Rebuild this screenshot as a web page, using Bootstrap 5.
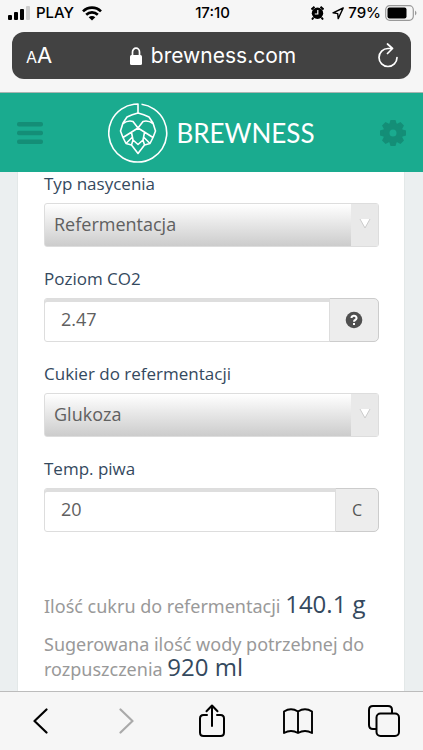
<!DOCTYPE html>
<html lang="pl">
<head>
<meta charset="utf-8">
<meta name="viewport" content="width=device-width, initial-scale=1">
<title>Brewness</title>
<link href="https://cdn.jsdelivr.net/npm/bootstrap@5.3.0/dist/css/bootstrap.min.css" rel="stylesheet">
<style>
body{background:#ebeff0;font-family:"Open Sans","Noto Sans",sans-serif;color:#34495e}
svg{display:block;flex-shrink:0}
.chrome-top,.chrome-bottom{background:#f6f6f6;font-family:Inter,"Liberation Sans",sans-serif;color:#000}
.chrome-top{border-bottom:1px solid #a9b5b2;padding-bottom:13px}
.status{height:32px;padding:0 6px 6px 8px;font-size:15px;line-height:26px;font-weight:500}
.side{flex:1 1 0}
.carrier{margin-left:6px}
.address{height:47px;margin:0 12px;padding:0 12px 0 14px;background:#424242;border-radius:12px;color:#fff}
.address .host{font-size:21px;line-height:47px}
.aa-small{font-size:16px}.aa-big{font-size:22px}
.chrome-btn{background:none;border:0;padding:0;color:inherit}
.site-header{background:#1aab8f;height:79px;padding:0 17px}
.site-header .chrome-btn{color:#148e77}
.brand{color:#fff;font-family:Lato,sans-serif;font-size:26px;line-height:1;gap:8px}
.brand:hover{color:#fff}
.sheet{background:#fff;border:solid #e3e8e8;border-width:0 1px;margin:0 18px 0 17px;padding:0 25px 0 26px}
.field{margin-bottom:20px}
.field label{display:block;font-size:17px;line-height:24px;margin-bottom:7px}
.pick{position:relative}
.pick select{height:44px;font-size:18px;line-height:24px;color:#606060;padding:0 38px 2px 9px;border:1px solid #ddd;border-radius:3px;background:linear-gradient(#fff,#ccc)}
.pick-arrow{position:absolute;top:1px;right:1px;bottom:1px;width:27px;background:#e9e9e9;pointer-events:none;padding-top:14px}
.entry .form-control{height:44px;font-size:18px;color:#606060;padding:0 16px 2px;border:1px solid #ddd;border-radius:3px;box-shadow:inset 0 3px 0 #dedede}
.entry .input-group-text{height:44px;background:#ededed;border:1px solid #ccc;border-radius:5px;color:#555;font-size:16px;padding:0 16px}
.entry button.input-group-text{padding:0 15px}
.results{padding-top:42px;color:#999;font-family:"Noto Sans",sans-serif;font-size:18px;line-height:25px}
.results p{margin-bottom:13px}
.results strong{font-family:"Open Sans",sans-serif;font-weight:400;font-size:24px;line-height:1px;color:#34495e}
.chrome-bottom{height:59px;border-top:1px solid #bcbcbc;padding:0 23px 0 24px}
.chrome-bottom .chrome-btn{width:32px}
.chrome-bottom svg{margin:0 auto}
</style>
<script src="https://cdn.jsdelivr.net/npm/bootstrap@5.3.0/dist/js/bootstrap.bundle.min.js"></script>
</head>
<body class="d-flex flex-column vh-100 overflow-hidden">
<div class="chrome-top flex-shrink-0">
  <div class="status d-flex align-items-center">
    <div class="side d-flex align-items-center">
      <svg width="22" height="14" viewBox="0 0 22 14"><rect x="0" y="9" width="4" height="5" rx="1"/><rect x="6" y="6" width="4" height="8" rx="1"/><rect x="12" y="3" width="4" height="11" rx="1"/><rect x="18" y="0" width="4" height="14" rx="1" fill="#ccc"/></svg>
      <span class="carrier">PLAY</span>
      <svg class="ms-2" width="20" height="15" viewBox="0 0 20 15" fill="none" stroke="#000" stroke-width="2.6"><path d="M1 5.4C6 .4 14 .4 19 5.4M4.2 8.8c3.3-3.2 8.3-3.2 11.6 0"/><path d="M10 14.5 6.7 11.2c1.9-1.7 4.7-1.7 6.6 0Z" fill="#000" stroke="none"/></svg>
    </div>
    <span>17:10</span>
    <div class="side d-flex align-items-center justify-content-end">
      <svg width="13" height="14" viewBox="0 0 13 14"><circle cx="6.5" cy="7.3" r="5.7"/><path d="M.5 3.5 3.5.8M12.500 3.500 9.500.8M2.500 11.500 1 13.500M10.500 11.500 12 13.500" stroke="#000" stroke-width="2"/><path d="M6.800 4v4H3.800" fill="none" stroke="#fff" stroke-width="1.200"/></svg>
      <svg class="ms-2" width="12" height="13" viewBox="0 0 12 13" fill="none" stroke="#000" stroke-width="1.400" stroke-linejoin="round"><path d="M11.200 1 1 5.800l4.700.8.500 5Z"/></svg>
      <span class="ms-1">79%</span>
      <svg class="ms-1" width="32" height="16" viewBox="0 0 32 16"><rect x=".7" y=".7" width="27.600" height="14.600" rx="4" fill="none" stroke="#999" stroke-width="1.200"/><rect x="2.500" y="2.500" width="19" height="11" rx="2"/><path d="M30 5.500q3 2.500 0 5Z" fill="#999"/></svg>
    </div>
  </div>
  <div class="address d-flex align-items-center">
    <div class="side"><button class="chrome-btn" type="button"><span class="aa-small">A</span><span class="aa-big">A</span></button></div>
    <div class="host d-flex align-items-center">
      <svg class="me-2" width="14" height="18" viewBox="0 0 14 18"><rect x="1" y="8" width="12" height="10" rx="1.500" fill="#fff"/><path d="M3.500 9V5a3.500 3.800 0 0 1 7 0v4" fill="none" stroke="#fff" stroke-width="1.700"/></svg>
      <span>brewness.com</span>
    </div>
    <div class="side d-flex justify-content-end">
      <button class="chrome-btn" type="button" aria-label="Odśwież"><svg width="22" height="26" viewBox="0 0 22 26" fill="none" stroke="#fff" stroke-width="1.700" stroke-linecap="round" stroke-linejoin="round"><path d="M20 14.500a9 9 0 1 1-9-9h4.500M10.500 1l5 4.500-5 5"/></svg></button>
    </div>
  </div>
</div>

<header class="site-header d-flex align-items-center justify-content-between flex-shrink-0">
  <button class="chrome-btn" type="button" aria-label="Menu"><svg width="26" height="22" viewBox="0 0 26 22" fill="currentColor"><rect width="26" height="4.500" rx="2"/><rect y="8.700" width="26" height="4.500" rx="2"/><rect y="17.400" width="26" height="4.500" rx="2"/></svg></button>
  <a class="brand d-flex align-items-center text-decoration-none" href="#">
    <svg width="60" height="60" viewBox="0 0 60 60" fill="none" stroke="#fff" stroke-width="1.600" stroke-linejoin="round"><path d="M33.500 1.300A29 29 0 1 1 26 1.300L30 1V10"/><path d="M30 10Q24 11.500 19 14L15 20 12.500 28 15 34.500 18 40.500 23.500 42 30 50.500 36.500 42 42 40.500 45 34.500 47.500 28 45 20 41 14Q36 11.500 30 10M15 20.500Q20 17 25 18.500L30 25 35 18.500Q40 17 45 20.500M30 25 15 34.500M30 25 45 34.500M23.500 29.500 25 37 30 41.500 35 37 36.500 29.500M25 37 23.500 42M35 37 36.500 42M24.500 34 18 40.500M35.500 34 42 40.500"/></svg>
    <span>BREWNESS</span>
  </a>
  <button class="chrome-btn" type="button" aria-label="Ustawienia"><svg width="26" height="26" viewBox="-13 -13 26 26" fill="currentColor"><path id="bar" d="M-2.500-13h5l1.500 5h-8ZM-2.500 13h5l1.500-5h-8Z"/><use href="#bar" transform="rotate(45)"/><use href="#bar" transform="rotate(90)"/><use href="#bar" transform="rotate(135)"/><circle r="6.700" fill="none" stroke="currentColor" stroke-width="6.400"/></svg></button>
</header>

<main class="flex-grow-1 overflow-hidden d-flex flex-column">
  <form class="sheet flex-grow-1">
    <div class="field">
      <label for="kind">Typ nasycenia</label>
      <div class="pick"><select class="form-select" id="kind"><option>Refermentacja</option></select>
        <span class="pick-arrow d-flex justify-content-center"><svg width="12" height="11" viewBox="0 0 12 11"><path d="M1 1h10L6 10Z" fill="#fff"/><path d="m1 1 5 9 5-9" fill="none" stroke="#ccc"/></svg></span></div>
    </div>
    <div class="field">
      <label for="level">Poziom CO2</label>
      <div class="input-group entry"><input class="form-control" id="level" type="text" value="2.47">
        <button class="input-group-text" type="button" aria-label="Pomoc"><svg width="18" height="18" viewBox="0 0 18 18"><circle cx="9" cy="9" r="8.300" fill="#505050"/><path d="M6.500 7a2.500 2.300 0 1 1 3.700 2Q9 9.600 9 10.800" fill="none" stroke="#fff" stroke-width="2"/><rect x="8" y="12" width="2" height="2" fill="#fff"/></svg></button></div>
    </div>
    <div class="field">
      <label for="sugar">Cukier do refermentacji</label>
      <div class="pick"><select class="form-select" id="sugar"><option>Glukoza</option></select>
        <span class="pick-arrow d-flex justify-content-center"><svg width="12" height="11" viewBox="0 0 12 11"><path d="M1 1h10L6 10Z" fill="#fff"/><path d="m1 1 5 9 5-9" fill="none" stroke="#ccc"/></svg></span></div>
    </div>
    <div class="field">
      <label for="temp">Temp. piwa</label>
      <div class="input-group entry"><input class="form-control" id="temp" type="text" value="20"><span class="input-group-text">C</span></div>
    </div>
    <div class="results">
      <p>Ilość cukru do refermentacji <strong>140.1 g</strong></p>
      <p>Sugerowana ilość wody potrzebnej do rozpuszczenia <strong>920 ml</strong></p>
    </div>
  </form>
</main>

<nav class="chrome-bottom d-flex align-items-center justify-content-between flex-shrink-0" aria-label="Przeglądarka">
  <button class="chrome-btn" type="button" aria-label="Wstecz"><svg width="15" height="26" viewBox="0 0 15 26" fill="none" stroke="#000" stroke-width="2.200" stroke-linecap="round" stroke-linejoin="round"><path d="M13.500 1.500 1.500 13l12 11.500"/></svg></button>
  <button class="chrome-btn" type="button" aria-label="Dalej"><svg width="15" height="26" viewBox="0 0 15 26" fill="none" stroke="#aaa" stroke-width="2.200" stroke-linecap="round" stroke-linejoin="round"><path d="m1.500 1.500 12 11.500-12 11.500"/></svg></button>
  <button class="chrome-btn" type="button" aria-label="Udostępnij"><svg width="26" height="34" viewBox="0 0 26 34" fill="none" stroke="#000" stroke-width="2" stroke-linecap="round" stroke-linejoin="round"><path d="M8 11H4.500Q1 11 1 14.500v14Q1 32 4.500 32h17q3.500 0 3.500-3.500v-14Q25 11 21.500 11H18M13 22V2M7.500 7.200 13 1.500l5.500 5.700"/></svg></button>
  <button class="chrome-btn" type="button" aria-label="Zakładki"><svg width="30" height="26" viewBox="0 0 30 26" fill="none" stroke="#000" stroke-width="1.900" stroke-linejoin="round"><path d="M15 3.500Q8-1 1 3.500V25q7-4 14 0 7-4 14 0V3.500Q22-1 15 3.500V25"/></svg></button>
  <button class="chrome-btn" type="button" aria-label="Karty"><svg width="32" height="32" viewBox="0 0 32 32" fill="none" stroke="#000" stroke-width="2"><path d="M8 24H5q-4 0-4-4V5q0-4 4-4h15q4 0 4 4v3"/><rect x="8.500" y="8.500" width="22.500" height="22.500" rx="4"/></svg></button>
</nav>
</body>
</html>
